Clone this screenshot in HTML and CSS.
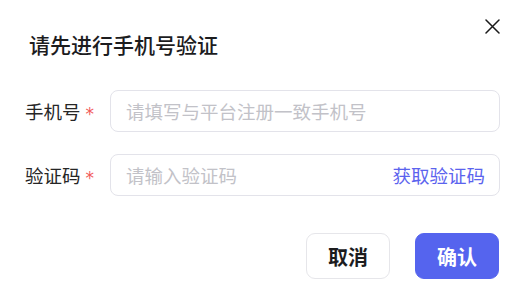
FILE: index.html
```html
<!DOCTYPE html>
<html lang="zh-CN">
<head>
<meta charset="utf-8">
<link rel="stylesheet" href="styles.css">
</head>
<body>
<div class="dialog">
  <div class="header">
    <h1 class="title">请先进行手机号验证</h1>
    <button class="close" aria-label="关闭">
      <svg width="15" height="15" viewBox="0 0 15 15"><path d="M1 1 L14 14 M14 1 L1 14" stroke="#1a1a1a" stroke-width="1.5" fill="none" stroke-linecap="round"/></svg>
    </button>
  </div>
  <div class="form">
    <div class="row">
      <label class="label">手机号<span class="req">*</span></label>
      <div class="field"><input class="input" placeholder="请填写与平台注册一致手机号"></div>
    </div>
    <div class="row">
      <label class="label">验证码<span class="req">*</span></label>
      <div class="field"><input class="input" placeholder="请输入验证码"><span class="get-code">获取验证码</span></div>
    </div>
  </div>
  <div class="footer">
    <button class="btn btn-cancel">取消</button>
    <button class="btn btn-ok">确认</button>
  </div>
</div>
</body>
</html>
```

FILE: styles.css
```css
* { box-sizing: border-box; }
html, body { margin: 0; padding: 0; background: #fff; }
body {
  font-family: "Noto Sans CJK SC", "Noto Sans", sans-serif;
  width: 516px;
  height: 306px;
  overflow: hidden;
}
.dialog {
  padding: 19px 16px 0 25px;
}
.header {
  display: flex;
  justify-content: space-between;
  align-items: flex-start;
}
.title {
  margin: 10px 0 0 4px;
  font-size: 21px;
  line-height: 30px;
  font-weight: 500;
  color: #1c1c1e;
}
.close {
  width: 15px;
  height: 15px;
  padding: 0;
  border: 0;
  background: none;
  display: block;
}
.close svg { display: block; }
.form {
  margin-top: 31px;
  display: flex;
  flex-direction: column;
  gap: 22px;
}
.row {
  display: flex;
  align-items: center;
}
.label {
  width: 85px;
  font-size: 18.5px;
  color: #262626;
  display: flex;
  align-items: center;
}
.req {
  color: #f25a5a;
  font-size: 17px;
  margin-left: 5px;
  font-family: "DejaVu Sans", sans-serif;
  line-height: 1;
  position: relative;
  top: 3px;
}
.field {
  flex: 1;
  height: 42px;
  border: 1px solid #e3e3ea;
  border-radius: 8px;
  display: flex;
  align-items: center;
  padding: 0 14px 0 15px;
}
.input {
  flex: 1;
  min-width: 0;
  border: 0;
  outline: none;
  padding: 0;
  font-family: inherit;
  font-size: 18.5px;
  color: #262626;
  background: transparent;
}
.input::placeholder { color: #c2c2c8; }
.get-code {
  font-size: 18.5px;
  color: #5b63ee;
  white-space: nowrap;
}
.footer {
  margin-top: 37px;
  display: flex;
  justify-content: flex-end;
  gap: 25px;
  padding-right: 1px;
}
.btn {
  width: 84px;
  height: 46px;
  border-radius: 9px;
  font-family: inherit;
  font-size: 20px;
  font-weight: 700;
  padding: 0;
}
.btn-cancel {
  background: #fff;
  border: 1px solid #e6e6ea;
  color: #1c1c1e;
}
.btn-ok {
  background: #5564ee;
  border: 1px solid #5564ee;
  color: #fff;
}
```
